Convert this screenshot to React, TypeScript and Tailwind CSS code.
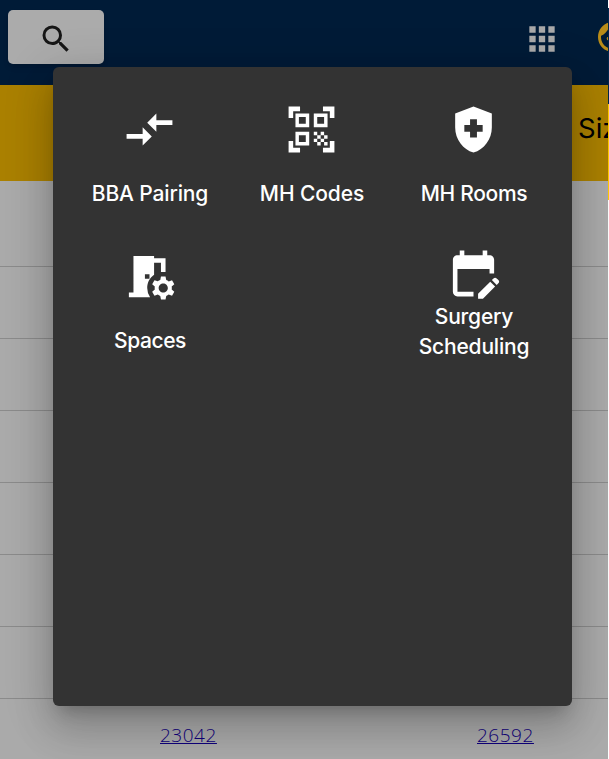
import {
  MdApps,
  MdCompareArrows,
  MdEditCalendar,
  MdFace,
  MdHealthAndSafety,
  MdQrCodeScanner,
  MdRoomPreferences,
  MdSearch,
} from "react-icons/md";

const label = "whitespace-nowrap text-center text-[21px] leading-[30px] font-medium";
const rows = [1, 2, 3, 4, 5, 6];

export default function App() {
  return (
    <div className="relative h-[759px] w-[609px] overflow-hidden bg-[#aaaaaa] font-['Inter','Liberation_Sans',sans-serif]">
      <header className="flex h-[85px] items-start bg-[#001b37]">
        <button className="mt-[10px] ml-2 flex h-[54px] w-24 shrink-0 items-center justify-center rounded-[5px] bg-[#ababab] text-[#161616] shadow-md">
          <MdSearch size={36} className="mt-[3px]" />
        </button>
        <MdApps size={38} className="mt-5 ml-[418.5px] shrink-0 text-[#a9a9a9]" />
        <MdFace size={36} className="mt-[19px] ml-[34.5px] shrink-0 text-[#b98c18]" />
      </header>
      <div className="flex h-24 justify-end bg-[#aa8000]">
        <span className="mt-[22px] w-[31px] text-[27.5px] leading-[42px] whitespace-nowrap text-black">Size</span>
      </div>
      <div className="h-[86px] border-b border-[#8b8b8b]" />
      {rows.map((row) => (
        <div key={row} className="h-[72px] border-b border-[#8b8b8b]" />
      ))}
      <div className="flex pt-[23px] font-['Open_Sans','Liberation_Sans',sans-serif] text-[19px] leading-[26px] font-light tracking-[0.5px] text-[#10007c] underline">
        <a className="ml-[160px] w-[317px]">23042</a>
        <a>26592</a>
      </div>
      <div className="absolute top-0 right-0 h-full w-px bg-white pt-2">
        <div className="h-24 bg-[#00274c]" />
        <div className="h-24 bg-[#ffcb05]" />
      </div>
      <section className="absolute top-[67px] left-[53px] h-[639px] w-[519px] rounded-md bg-[#333333] px-4 pt-[35px] text-white shadow-[0_11px_15px_-7px_rgba(0,0,0,0.2),0_24px_38px_3px_rgba(0,0,0,0.14),0_9px_46px_8px_rgba(0,0,0,0.12)]">
        <div className="grid grid-cols-[162px_162px_162px] grid-rows-[146px_146px]">
          <div className="flex flex-col items-center">
            <MdCompareArrows size={55} className="mr-px" />
            <span className={`${label} mt-[22px] tracking-[-0.15px]`}>BBA Pairing</span>
          </div>
          <div className="flex flex-col items-center">
            <MdQrCodeScanner size={55} className="mr-px" />
            <span className={`${label} mt-[22px] tracking-[-0.1px]`}>MH Codes</span>
          </div>
          <div className="flex flex-col items-center">
            <MdHealthAndSafety size={55} className="mr-px" />
            <span className={`${label} mt-[22px] tracking-[-0.3px]`}>MH Rooms</span>
          </div>
          <div className="flex flex-col items-center pt-px">
            <MdRoomPreferences size={55} className="mr-px" />
            <span className={`${label} mt-[22px] tracking-[-0.4px]`}>Spaces</span>
          </div>
          <div />
          <div className="-mt-[2px] flex flex-col items-center">
            <MdEditCalendar size={55} className="mr-px" />
            <span className={`${label} mt-px tracking-[-0.2px]`}>
              Surgery
              <br />
              Scheduling
            </span>
          </div>
        </div>
      </section>
    </div>
  );
}
